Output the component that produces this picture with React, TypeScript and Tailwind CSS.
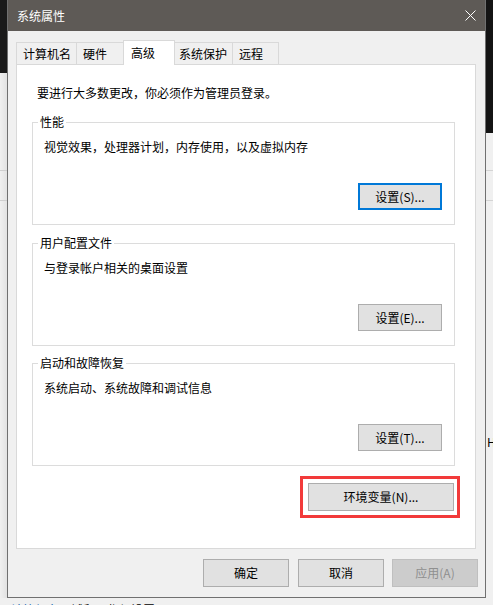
import React from 'react';

const tabs = [
  { label: '计算机名', w: 'w-[61px]', pl: 'pl-[6px]' },
  { label: '硬件', w: 'w-[48px]', pl: 'pl-[6px]' },
  { label: '高级', w: 'w-[52px]', pl: 'pl-[7px]', active: true },
  { label: '系统保护', w: 'w-[59px]', pl: 'pl-[4px]' },
  { label: '远程', w: 'w-[47px]', pl: 'pl-[6px]' },
];

function Button({ label, className = '', focused = false, disabled = false }: { label: string; className?: string; focused?: boolean; disabled?: boolean }) {
  return (
    <div
      className={
        'flex items-center justify-center text-[12px] leading-[16px] ' +
        (focused
          ? 'border-2 border-[#0078d7] bg-[#e1e1e1] text-black '
          : disabled
          ? 'border border-[#bfbfbf] bg-[#cccccc] text-[#8f8f8f] '
          : 'border border-[#adadad] bg-[#e1e1e1] text-black ') +
        className
      }
    >
      {label}
    </div>
  );
}

function Group({ title, desc, button, focused = false, className = '' }: { title: string; desc: string; button: string; focused?: boolean; className?: string }) {
  return (
    <div className={'relative h-[103px] border border-[#dcdcdc] flex flex-col pt-[16px] pl-[11px] pr-[12px] pb-[14px] ' + className}>
      {/* group caption sits on the frame line */}
      <span className="absolute left-[5px] -top-[9px] bg-white px-[2px] text-[12px] leading-[16px] text-black">{title}</span>
      <div className="text-[12px] leading-[16px] text-black">{desc}</div>
      <div className="mt-auto flex justify-end">
        <Button label={button} focused={focused} className="w-[84px] h-[27px]" />
      </div>
    </div>
  );
}

function LeftStrip() {
  return (
    <div className="w-[7px] flex flex-col bg-[#efefef]">
      <div className="h-[73px] bg-[#1a1a1a]" />
      <div className="h-[97px] bg-gradient-to-r from-[#f0f0f0] to-[#e2e2e2]" />
      <div className="h-[30px] border-t border-[#cfcfcf] bg-gradient-to-r from-[#f0f0f0] to-[#e2e2e2]" />
      <div className="flex-1 border-t border-[#cfcfcf] bg-gradient-to-r from-[#f0f0f0] to-[#e2e2e2]" />
    </div>
  );
}

function RightStrip() {
  return (
    <div className="flex-1 flex flex-col bg-[#f0f0f0] overflow-hidden">
      <div className="h-[133px] bg-[#141414]" />
      <div className="h-[37px]" />
      <div className="h-[30px] border-t border-[#d4d4d4]" />
      <div className="h-[235px] border-t border-[#d4d4d4]" />
      <div className="pl-[1px] text-[12px] leading-[14px] text-black whitespace-nowrap">Hz</div>
    </div>
  );
}

export default function App() {
  return (
    <div className="w-[493px] h-[605px] overflow-hidden flex flex-col bg-[#f0f0f0] font-['Noto_Sans_CJK_SC',sans-serif]">
      <div className="flex h-[598px] shrink-0">
        <LeftStrip />

        {/* dialog window */}
        <div className="w-[479px] flex flex-col border-x border-b border-[#707070] bg-[#f0f0f0]">
          <div className="h-[31px] bg-[#5e5a56] flex items-center justify-between pl-[9px] pr-[9px]">
            <span className="text-[12px] leading-[16px] text-white">系统属性</span>
            <svg width="11" height="11" viewBox="0 0 11 11" className="block">
              <path d="M0.5 0.5 L10.5 10.5 M10.5 0.5 L0.5 10.5" stroke="#ffffff" strokeWidth="1" fill="none" />
            </svg>
          </div>

          <div className="flex-1 flex flex-col">
            {/* tab headers */}
            <div className="mt-[9px] ml-[8px] flex items-end">
              {tabs.map((t, i) => (
                <div
                  key={t.label}
                  className={
                    'flex items-center border-t border-x border-[#d9d9d9] text-[12px] leading-[16px] text-black ' +
                    t.w + ' ' + t.pl + ' ' +
                    (i > 0 ? '-ml-px ' : '') +
                    (t.active ? 'h-[25px] -mb-px bg-white relative z-10' : 'h-[22px] bg-[#f0f0f0]')
                  }
                >
                  {t.label}
                </div>
              ))}
            </div>

            {/* tab page */}
            <div className="ml-[8px] w-[460px] h-[485px] border border-[#d9d9d9] bg-white flex flex-col pl-[15px] pr-[20px]">
              <div className="mt-[20px] pl-[5px] text-[12px] leading-[16px] text-black">要进行大多数更改，你必须作为管理员登录。</div>

              <Group className="mt-[21px]" title="性能" desc="视觉效果，处理器计划，内存使用，以及虚拟内存" button="设置(S)..." focused />
              <Group className="mt-[18px]" title="用户配置文件" desc="与登录帐户相关的桌面设置" button="设置(E)..." />
              <Group className="mt-[17px]" title="启动和故障恢复" desc="系统启动、系统故障和调试信息" button="设置(T)..." />

              <div className="mt-[10px] self-end -mr-[5px] border-[3px] border-[#f23a3a] pt-[4px] pb-[4px] pl-[5px] pr-[3px]">
                <Button label="环境变量(N)..." className="w-[146px] h-[28px]" />
              </div>
            </div>

            {/* dialog buttons */}
            <div className="mt-[10px] flex justify-end pr-[7px]">
              <Button label="确定" className="w-[86px] h-[28px]" />
              <Button label="取消" className="ml-[9px] w-[86px] h-[28px]" />
              <Button label="应用(A)" disabled className="ml-[8px] w-[86px] h-[28px]" />
            </div>
          </div>
        </div>

        <RightStrip />
      </div>

      <div className="flex-1 pl-[11px] pt-[4px] text-[12px] leading-[16px] whitespace-nowrap">
        <span className="text-[#0b5cad]">计算机名</span>
        <span className="text-black">、域和工作组设置</span>
      </div>
    </div>
  );
}
